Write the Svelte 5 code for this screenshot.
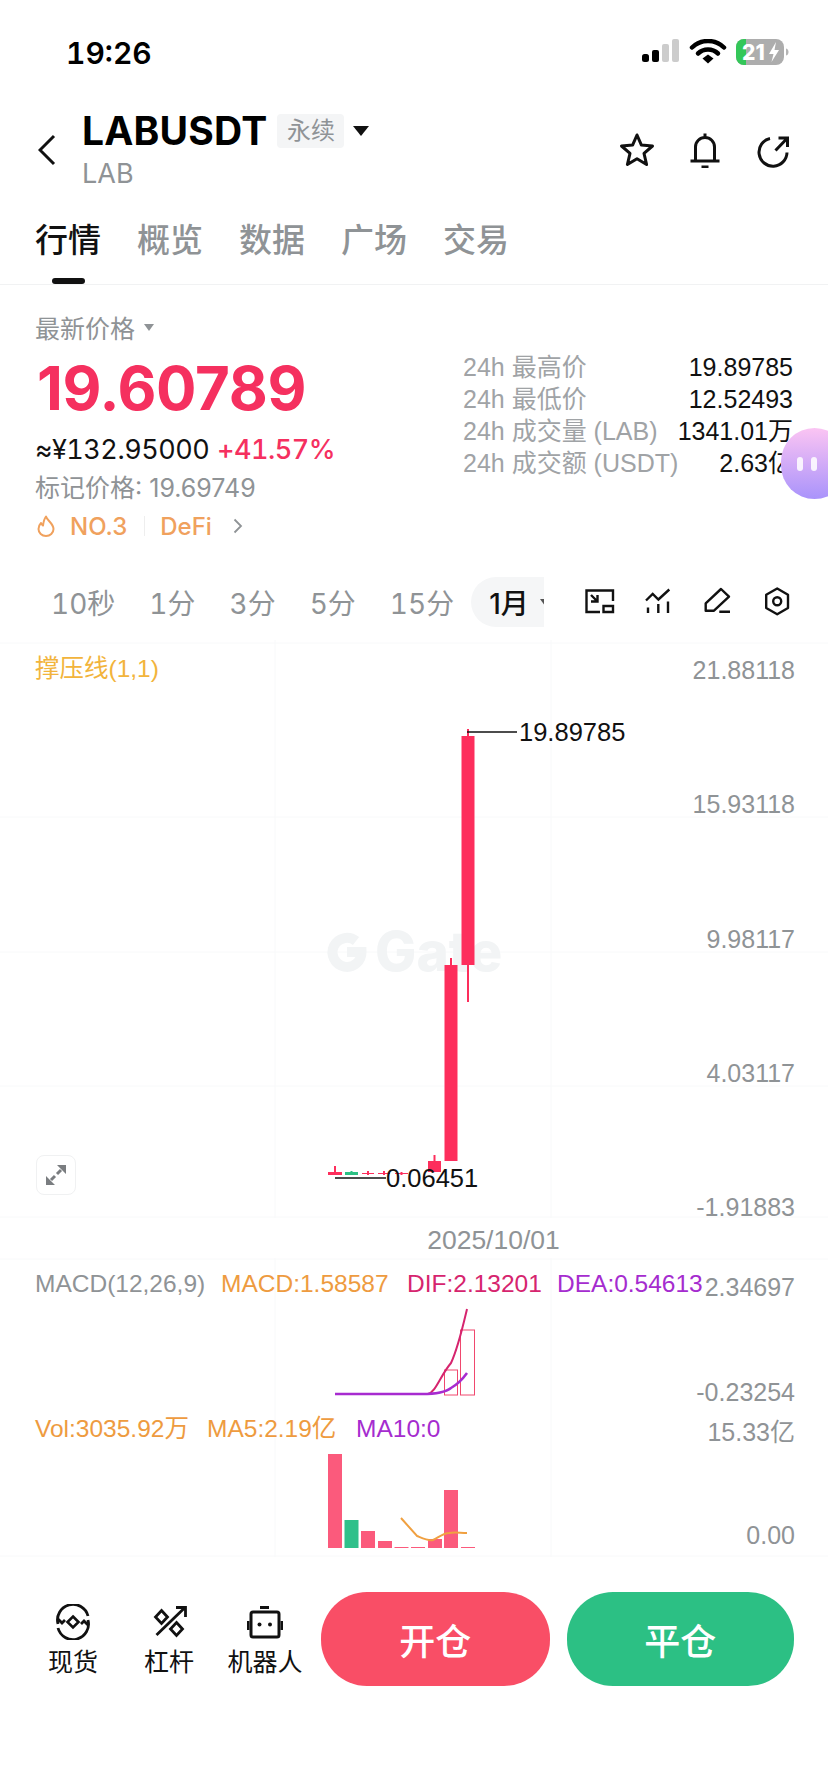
<script>
	const tabs = ['行情', '概览', '数据', '广场', '交易'];
	const periods = ['10秒', '1分', '3分', '5分', '15分'];
	const stats = [
		{ label: '24h 最高价', value: '19.89785' },
		{ label: '24h 最低价', value: '12.52493' },
		{ label: '24h 成交量 (LAB)', value: '1341.01万' },
		{ label: '24h 成交额 (USDT)', value: '2.63亿' }
	];
	const priceAxis = [
		{ y: 670, text: '21.88118' },
		{ y: 804, text: '15.93118' },
		{ y: 939, text: '9.98117' },
		{ y: 1073, text: '4.03117' },
		{ y: 1207, text: '-1.91883' }
	];
	const candles = [
		{ x: 328, w: 14, top: 1172, bottom: 1175, hi: 1166, lo: 1175, c: 'up' },
		{ x: 345, w: 13, top: 1172, bottom: 1175, hi: 1171, lo: 1175, c: 'down' },
		{ x: 362, w: 12, top: 1173, bottom: 1174, hi: 1171, lo: 1175, c: 'up' },
		{ x: 378, w: 12, top: 1173, bottom: 1174, hi: 1171, lo: 1175, c: 'up' },
		{ x: 395, w: 13, top: 1173, bottom: 1174, hi: 1172, lo: 1175, c: 'up' },
		{ x: 428, w: 13, top: 1161, bottom: 1172, hi: 1155, lo: 1172, c: 'up' },
		{ x: 444.5, w: 13, top: 965, bottom: 1161, hi: 958, lo: 1161, c: 'up' },
		{ x: 461.5, w: 13, top: 736, bottom: 965, hi: 729, lo: 1002, c: 'up' }
	];
	const volumes = [
		{ x: 328, top: 1454, c: 'up' },
		{ x: 344.5, top: 1520, c: 'down' },
		{ x: 361, top: 1531, c: 'up' },
		{ x: 378, top: 1541, c: 'up' },
		{ x: 394.5, top: 1547, c: 'up' },
		{ x: 411, top: 1547, c: 'up' },
		{ x: 428, top: 1539, c: 'up' },
		{ x: 444, top: 1490, c: 'up' },
		{ x: 461, top: 1547, c: 'up' }
	];
</script>

<div class="page">
	<div class="status">
		<span class="time">19:26</span>
		<svg class="status-icons" width="153" height="28" viewBox="0 0 153 28">
			<rect x="1" y="15" width="7" height="8" rx="2.5" fill="#000" />
			<rect x="11" y="11" width="7" height="12" rx="2" fill="#000" />
			<rect x="21" y="5" width="7" height="18" rx="2" fill="#ccc" />
			<rect x="31" y="0" width="7" height="23" rx="2" fill="#ccc" />
			<path d="M51 8.500a23 23 0 0 1 32 0" fill="none" stroke="#000" stroke-width="4.500" stroke-linecap="round" />
			<path d="M57 14.500a14.500 14.500 0 0 1 20 0" fill="none" stroke="#000" stroke-width="4.500" stroke-linecap="round" />
			<path d="M61.500 19.500l5.500-4 5.500 4-5.500 5z" fill="#000" />
			<rect x="95" y="0" width="48" height="26" rx="8" fill="#adadad" />
			<path d="M103 0h2v26h-2a8 8 0 0 1-8-8V8a8 8 0 0 1 8-8z" fill="#34c759" />
			<text class="battery-text" x="101" y="21">21</text>
			<path d="M135 3l-7 12h4.500l-2 8 7.500-12h-4.500z" fill="#fff" />
			<path d="M145 9.500c2 .5 2.500 2 2.500 3.500s-.5 3-2.500 3.500z" fill="#b5b5b5" />
		</svg>
	</div>

	<header class="head">
		<svg class="back" width="18" height="32" viewBox="0 0 18 32">
			<path d="M16 2L2 16l14 14" fill="none" stroke="#111" stroke-width="3" />
		</svg>
		<div class="title-col">
			<div class="title-row">
				<span class="symbol">LABUSDT</span>
				<span class="tag">永续</span>
				<span class="caret"></span>
			</div>
			<div class="sub">LAB</div>
		</div>
		<div class="head-icons">
			<svg width="36" height="36" viewBox="0 0 36 36">
				<path d="M18 3l4.300 9.900 11.200 1.100-8.500 7.400 2.600 11.100-9.600-5.800-9.600 5.800 2.600-11.100-8.500-7.400 11.200-1.100z" fill="none" stroke="#111" stroke-width="3" stroke-linejoin="round" />
			</svg>
			<svg width="36" height="36" viewBox="0 0 36 36">
				<path d="M8.500 28V15a9.500 9.500 0 0 1 19 0v13M3.500 29h29M14.500 35h7M18 1.500v3" fill="none" stroke="#111" stroke-width="3" />
			</svg>
			<svg width="36" height="36" viewBox="0 0 36 36">
				<path d="M15 6.500A14 14 0 1 0 32 20.500M20.500 18.500L32 6.500M23.500 6h9v9" fill="none" stroke="#111" stroke-width="3" />
			</svg>
		</div>
	</header>

	<nav class="tabs">
		{#each tabs as tab, i}
			<div class="tab" class:active={i === 0}>
				<span>{tab}</span>
				<i></i>
			</div>
		{/each}
	</nav>

	<section class="summary">
		<div class="price-col">
			<div class="price-type">最新价格<span class="mini-caret"></span></div>
			<div class="last">19.60789</div>
			<div class="fiat">≈¥132.95000 <b>+41.57%</b></div>
			<div class="mark">标记价格: 19.69749</div>
			<div class="rank">
				<svg width="18" height="22" viewBox="0 0 18 22">
					<path d="M9 1.500c1 4 7.500 7 7.500 12.500a7.500 7 0 0 1-15 0c0-2.500 1-4.500 2.500-6 .5 1.500 1 2 2 2.500C6.500 7 7 4 9 1.500z" fill="none" stroke="#f0a15d" stroke-width="2" stroke-linejoin="round" />
				</svg>
				<span class="rank-no">NO.3</span>
				<span class="rank-line"></span>
				<span>DeFi</span>
				<svg class="rank-more" width="10" height="16" viewBox="0 0 10 16">
					<path d="M1.500 1.500L8 8l-6.500 6.500" fill="none" stroke="#8f9396" stroke-width="1.800" />
				</svg>
			</div>
		</div>
		<dl class="stats">
			{#each stats as s}
				<div class="stat">
					<dt>{s.label}</dt>
					<dd>{s.value}</dd>
				</div>
			{/each}
		</dl>
	</section>

	<div class="periods">
		<div class="period-list">
			{#each periods as p}
				<span class="period">{p}</span>
			{/each}
			<span class="period current">1月<span class="mini-caret dark"></span></span>
		</div>
		<div class="tools-top">
			<svg width="30" height="30" viewBox="0 0 30 30">
				<path d="M15 25H1.500V3.500H28V14M18.500 19H28v6h-9.500zM6 8l6 6M12.500 8v6.500H6" fill="none" stroke="#111" stroke-width="2.400" />
			</svg>
			<svg width="30" height="30" viewBox="0 0 30 30">
				<path d="M2 13.500L8.700 7l5.700 5.500L25.300 2.500M4 20.500V26M14.300 17v9M24 14.500V26" fill="none" stroke="#111" stroke-width="2.400" />
			</svg>
			<svg width="30" height="30" viewBox="0 0 30 30">
				<path d="M2.700 23.700v-7.400L18 2l8 7.700-15 14zM16.300 24.700H27" fill="none" stroke="#111" stroke-width="2.400" stroke-linejoin="round" />
			</svg>
			<svg width="30" height="30" viewBox="0 0 30 30">
				<path d="M15.200 1.500L26 7.700V21l-10.800 6.200L4.200 21V7.700z" fill="none" stroke="#111" stroke-width="2.400" stroke-linejoin="round" />
				<circle cx="15.200" cy="14.300" r="4" fill="none" stroke="#111" stroke-width="2.400" />
			</svg>
		</div>
	</div>

	<div class="chart">
		<svg class="pane" width="828" height="578" viewBox="0 640 828 578">
			{#each [643, 817, 952, 1086, 1217] as y}
				<line x1="0" x2="828" y1={y} y2={y} class="grid" />
			{/each}
			<line x1="275" x2="275" y1="640" y2="1218" class="grid" />
			<line x1="551" x2="551" y1="640" y2="1218" class="grid" />

			<path d="M356 941A14.500 14.500 0 1 0 361.500 952H347" fill="none" stroke="#f2f4f5" stroke-width="10" />
			<text x="375" y="971" class="watermark">Gate</text>

			<text x="35" y="677" class="legend sr">撑压线(1,1)</text>

			{#each priceAxis as a}
				<text x="795" y={a.y + 9} class="axis">{a.text}</text>
			{/each}

			{#each candles as c}
				<line x1={c.x + c.w / 2} x2={c.x + c.w / 2} y1={c.hi} y2={c.lo} class={c.c} />
				<rect x={c.x} y={c.top} width={c.w} height={c.bottom - c.top} class={c.c} />
			{/each}

			<line x1="467" x2="517" y1="732" y2="732" class="leader" />
			<text x="519" y="741" class="extreme">19.89785</text>
			<line x1="335" x2="386" y1="1178" y2="1178" class="leader" />
			<text x="386" y="1187" class="extreme">0.06451</text>
		</svg>

		<button class="fullscreen" aria-label="全屏">
			<svg width="20" height="20" viewBox="0 0 20 20">
				<path d="M20 0v9l-9-9zM0 20v-9l9 9z" fill="#7a7d80" />
				<path d="M15 5l-4 4M5 15l4-4" fill="none" stroke="#7a7d80" stroke-width="3" />
			</svg>
		</button>

		<div class="date">2025/10/01</div>

		<svg class="pane bottom" width="828" height="299" viewBox="0 1258 828 299">
			<line x1="0" x2="828" y1="1259" y2="1259" class="grid" />
			<line x1="0" x2="828" y1="1556" y2="1556" class="grid" />
			<line x1="275" x2="275" y1="1258" y2="1557" class="grid" />
			<line x1="551" x2="551" y1="1258" y2="1557" class="grid" />

			<text y="1292" class="legend">
				<tspan x="35" fill="#8f9396">MACD(12,26,9)</tspan>
				<tspan x="221" fill="#ee9b3f">MACD:1.58587</tspan>
				<tspan x="407" fill="#d6246e">DIF:2.13201</tspan>
				<tspan x="557" fill="#a52ccf">DEA:0.54613</tspan>
			</text>
			<text x="795" y="1296" class="axis">2.34697</text>
			<text x="795" y="1401" class="axis">-0.23254</text>

			<rect x="444.500" y="1370" width="13" height="25" class="hist" />
			<rect x="460.500" y="1330" width="14" height="65" class="hist" />
			<path d="M335 1394H428C436 1392 440 1376 451 1363C458 1348 462 1330 467 1309" class="dif" />
			<path d="M335 1394H422C438 1394 446 1392 451 1388C458 1384 462 1380 467 1373" class="dea" />

			<text y="1437" class="legend">
				<tspan x="35" fill="#ee9b3f">Vol:3035.92万</tspan>
				<tspan x="207" fill="#ee9b3f">MA5:2.19亿</tspan>
				<tspan x="356" fill="#a52ccf">MA10:0</tspan>
			</text>
			<text x="795" y="1441" class="axis">15.33亿</text>
			<text x="795" y="1544" class="axis">0.00</text>

			{#each volumes as v}
				<rect x={v.x} y={v.top} width="14" height={1548 - v.top} class={v.c === 'up' ? 'vol-up' : 'vol-down'} />
			{/each}
			<path d="M401 1518L417 1536C422 1538 428 1541 433 1540C438 1538 443 1533 449 1533C455 1532 460 1533 467 1533" class="ma5" />
		</svg>
	</div>

	<footer class="actions">
		<div class="tool">
			<svg width="36" height="36" viewBox="0 0 36 36">
				<path d="M3 20A15.500 15.500 0 0 1 33 12M33 16A15.500 15.500 0 0 1 3 24M3 15l4 4 3-3M33 21l-4-4-3 3" fill="none" stroke="#111" stroke-width="2.800" />
				<path d="M18 12.500l5.500 5.500-5.500 5.500-5.500-5.500z" fill="none" stroke="#111" stroke-width="2.600" />
			</svg>
			<span>现货</span>
		</div>
		<div class="tool">
			<svg width="36" height="36" viewBox="0 0 36 36">
				<path d="M10.500 6.500l6 6.500-6 6.500-6-6.500zM25.500 18.500l6 6.500-6 6.500-6-6.500zM5.500 31L34 3.500M25 3.500h9.500V13" fill="none" stroke="#111" stroke-width="2.800" />
			</svg>
			<span>杠杆</span>
		</div>
		<div class="tool">
			<svg width="36" height="36" viewBox="0 0 36 36">
				<rect x="4" y="8" width="28" height="25" rx="2" fill="none" stroke="#111" stroke-width="3" />
				<path d="M13 2h9v3h-9zM0 17h2.500v9H0zM33.500 17H36v9h-2.500z" fill="#111" />
				<circle cx="12.500" cy="20.500" r="2" fill="#111" />
				<circle cx="23" cy="20.500" r="2" fill="#111" />
			</svg>
			<span>机器人</span>
		</div>
		<button class="trade open">开仓</button>
		<button class="trade close">平仓</button>
	</footer>

	<div class="bubble"><i></i><i></i></div>
</div>

<style>
	:global(body) {
		margin: 0;
		background: #fff;
	}

	.page {
		position: relative;
		width: 828px;
		height: 1792px;
		overflow: hidden;
		background: #fff;
		color: #111;
		font-family: Inter, 'Noto Sans CJK SC', sans-serif;
	}

	.status {
		display: flex;
		align-items: center;
		justify-content: space-between;
		height: 105px;
		padding: 0 38px 0 66px;
		box-sizing: border-box;
	}

	.time {
		font-size: 30px;
		font-weight: 600;
		font-feature-settings: 'tnum';
		color: #000;
	}

	.status-icons {
		margin-right: -4px;
	}

	.battery-text {
		font-size: 21px;
		font-weight: 800;
		fill: #fff;
	}

	.head {
		display: flex;
		align-items: center;
		height: 90px;
		padding: 0 37px 0 38px;
		box-sizing: border-box;
	}

	.back {
		flex-shrink: 0;
	}

	.title-col {
		margin-left: 26px;
	}

	.title-row {
		display: flex;
		align-items: center;
		height: 40px;
	}

	.symbol {
		font-size: 39px;
		font-weight: 700;
		letter-spacing: 0.200px;
		color: #000;
	}

	.tag {
		margin-left: 10px;
		height: 34px;
		line-height: 34px;
		padding: 0 9.500px;
		background: #f4f5f6;
		border-radius: 4px;
		font-size: 24px;
		color: #8f9396;
	}

	.caret {
		margin-left: 9px;
		border-left: 8px solid transparent;
		border-right: 8px solid transparent;
		border-top: 10px solid #111;
	}

	.sub {
		margin-top: 7px;
		height: 32px;
		line-height: 32px;
		font-size: 27px;
		color: #8f9396;
	}

	.head-icons {
		display: flex;
		gap: 32px;
		margin-left: auto;
	}

	.tabs {
		display: flex;
		gap: 36px;
		height: 90px;
		padding: 22px 0 0 35px;
		box-sizing: border-box;
		border-bottom: 1px solid #f1f2f3;
	}

	.tab {
		display: flex;
		flex-direction: column;
		align-items: center;
		font-size: 33px;
		line-height: 46px;
		font-weight: 500;
		color: #8f9396;
	}

	.tab i {
		width: 33px;
		height: 6px;
		margin-top: 15px;
		border-radius: 3px;
	}

	.tab.active {
		color: #111;
	}

	.tab.active i {
		background: #111;
	}

	.summary {
		display: flex;
		justify-content: space-between;
		height: 292px;
	}

	.price-col {
		padding: 25px 0 0 35px;
	}

	.price-type {
		display: flex;
		align-items: center;
		height: 34px;
		font-size: 25px;
		color: #8f9396;
	}

	.mini-caret {
		margin-left: 9px;
		border-left: 5.500px solid transparent;
		border-right: 5.500px solid transparent;
		border-top: 7px solid #8f9396;
	}

	.mini-caret.dark {
		margin-left: 11px;
		border-top-color: #555;
	}

	.last {
		margin: 9px 0 0 2px;
		height: 70px;
		line-height: 70px;
		font-size: 60px;
		font-weight: 700;
		color: #f5305f;
		letter-spacing: -0.300px;
	}

	.fiat {
		margin-top: 10px;
		height: 34px;
		line-height: 34px;
		font-size: 27px;
		font-feature-settings: 'tnum';
		letter-spacing: -0.500px;
		color: #111;
		white-space: nowrap;
	}

	.fiat b {
		margin-left: 1px;
		font-weight: 500;
		color: #f5305f;
	}

	.mark {
		margin-top: 4px;
		height: 34px;
		line-height: 34px;
		font-size: 25px;
		color: #8f9396;
	}

	.rank {
		display: flex;
		align-items: center;
		margin: 4px 0 0 2px;
		height: 34px;
		font-size: 24px;
		font-weight: 500;
		color: #f0a15d;
	}

	.rank-no {
		margin-left: 15px;
	}

	.rank-line {
		width: 1px;
		height: 20px;
		margin: 0 15px 0 17px;
		background: #eee;
	}

	.rank-more {
		margin-left: 21px;
	}

	.stats {
		width: 330px;
		margin: 66px 35px 0 0;
		font-family: 'Liberation Sans', 'Noto Sans CJK SC', sans-serif;
	}

	.stat {
		display: flex;
		justify-content: space-between;
		height: 32px;
		line-height: 32px;
		font-size: 25px;
		white-space: nowrap;
	}

	.stat dt {
		color: #a0a3a6;
	}

	.stat dd {
		margin: 0;
		color: #111;
	}

	.periods {
		display: flex;
		align-items: center;
		height: 50px;
		padding-right: 36px;
	}

	.period-list {
		display: flex;
		align-items: center;
		width: 544px;
		height: 50px;
		padding-left: 34px;
		box-sizing: border-box;
		overflow: hidden;
		white-space: nowrap;
		flex-shrink: 0;
	}

	.period {
		display: flex;
		align-items: center;
		flex-shrink: 0;
		height: 50px;
		padding: 0 17px;
		font-size: 28px;
		font-feature-settings: 'tnum';
		color: #8f9396;
	}

	.period.current {
		margin-left: 0;
		padding: 0 18px;
		background: #f5f6f7;
		border-radius: 25px;
		color: #111;
		font-weight: 500;
		font-feature-settings: normal;
	}

	.tools-top {
		display: flex;
		gap: 29px;
		margin-left: auto;
	}

	.chart {
		position: relative;
		margin-top: 13px;
	}

	.pane {
		display: block;
		overflow: visible;
	}

	.grid {
		stroke: #f8f9fa;
		stroke-width: 1;
	}

	.watermark {
		font-size: 55px;
		font-weight: 800;
		fill: #f2f4f5;
	}

	.legend {
		font-family: 'Liberation Sans', 'Noto Sans CJK SC', sans-serif;
		font-size: 24.500px;
		fill: #8f9396;
	}

	.legend.sr {
		fill: #f2b43c;
	}

	.axis {
		font-family: 'Liberation Sans', 'Noto Sans CJK SC', sans-serif;
		font-size: 25px;
		fill: #8f9396;
		text-anchor: end;
	}

	.extreme {
		font-family: 'Liberation Sans', sans-serif;
		font-size: 25.500px;
		fill: #111;
	}

	.leader {
		stroke: #111;
		stroke-width: 1.500;
	}

	rect.up {
		fill: #fd2e5c;
	}

	rect.down {
		fill: #2cc084;
	}

	line.up {
		stroke: #fd2e5c;
		stroke-width: 2;
	}

	line.down {
		stroke: #2cc084;
		stroke-width: 2;
	}

	.fullscreen {
		position: absolute;
		left: 36px;
		top: 515px;
		display: flex;
		align-items: center;
		justify-content: center;
		width: 40px;
		height: 40px;
		padding: 0;
		background: #fff;
		border: 1px solid #f0f1f2;
		border-radius: 8px;
	}

	.date {
		height: 40px;
		line-height: 44px;
		text-align: center;
		padding-left: 159px;
		font-family: 'Liberation Sans', sans-serif;
		font-size: 26.500px;
		color: #8f9396;
	}

	.hist {
		fill: none;
		stroke: #f0486e;
		stroke-width: 1;
	}

	.dif {
		fill: none;
		stroke: #d6246e;
		stroke-width: 2;
	}

	.dea {
		fill: none;
		stroke: #a72bd0;
		stroke-width: 2.500;
	}

	.ma5 {
		fill: none;
		stroke: #f0a040;
		stroke-width: 2;
	}

	.vol-up {
		fill: #fb5a7c;
	}

	.vol-down {
		fill: #2fc08a;
	}

	.actions {
		display: flex;
		padding: 35px 34px 0 25px;
	}

	.tool {
		display: flex;
		flex-direction: column;
		align-items: center;
		flex: 0 0 96px;
		padding-top: 12px;
		box-sizing: border-box;
		font-size: 25px;
		color: #111;
	}

	.tool span {
		margin-top: 7px;
		line-height: 30px;
		white-space: nowrap;
	}

	.trade {
		height: 94px;
		border: 0;
		border-radius: 46px;
		color: #fff;
		font-family: inherit;
		font-size: 36px;
		font-weight: 500;
	}

	.open {
		width: 229px;
		margin-left: 8px;
		background: #f94e66;
	}

	.close {
		width: 228px;
		margin-left: 17px;
		background: #2cc084;
	}

	.bubble {
		position: absolute;
		right: -20px;
		top: 428px;
		display: flex;
		align-items: center;
		gap: 8px;
		width: 67px;
		height: 71px;
		padding-left: 16px;
		box-sizing: border-box;
		border-radius: 36px;
		background: linear-gradient(180deg, #fbc4f3, #a993fb);
	}

	.bubble i {
		width: 6px;
		height: 14px;
		border-radius: 3px;
		background: rgba(255, 255, 255, 0.85);
	}
</style>
